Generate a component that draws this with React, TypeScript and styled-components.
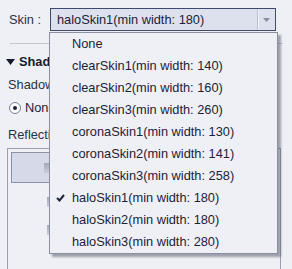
import React from 'react';
import styled, { createGlobalStyle } from 'styled-components';

const GlobalStyle = createGlobalStyle`
  html, body {
    margin: 0;
    padding: 0;
    background: #eff0f6;
  }
  body {
    font-family: "Liberation Sans", Arial, sans-serif;
    font-size: 12.8px;
    color: #1c2238;
  }
`;

const skins = [
  'None',
  'clearSkin1(min width: 140)',
  'clearSkin2(min width: 160)',
  'clearSkin3(min width: 260)',
  'coronaSkin1(min width: 130)',
  'coronaSkin2(min width: 141)',
  'coronaSkin3(min width: 258)',
  'haloSkin1(min width: 180)',
  'haloSkin2(min width: 180)',
  'haloSkin3(min width: 280)',
];

const Page = styled.div`
  position: relative;
  width: 292px;
  height: 269px;
  overflow: hidden;
  background: #eff0f6;
`;

const SkinRow = styled.div`
  display: flex;
  align-items: center;
  padding: 8px 16px 0 9px;
  height: 23px;
`;

const Label = styled.span`
  width: 41px;
  color: #2d3142;
`;

const SelectBox = styled.div`
  flex: 1;
  display: flex;
  align-items: center;
  height: 21px;
  background: #dde1ee;
  border: 1px solid #3f4a6e;
  padding-left: 6px;
`;

const SelectValue = styled.span`
  flex: 1;
  color: #1c2238;
`;

const ArrowCell = styled.div`
  width: 17px;
  height: 100%;
  display: flex;
  align-items: center;
  justify-content: center;
  border-left: 1px solid #b8bdd0;
  box-shadow: inset 1px 0 0 #f4f5fa;
`;

const Divider = styled.div`
  margin: 12px 9px 0 10px;
  height: 1px;
  background: #c3c7d4;
`;

const SectionHeader = styled.div`
  display: flex;
  align-items: center;
  gap: 4px;
  margin: 10px 0 0 6px;
  font-weight: bold;
  color: #151a2e;
`;

const FieldLabel = styled.div<{ $top: number }>`
  margin: ${p => p.$top}px 0 0 8px;
  color: #2a3046;
`;

const RadioRow = styled.div`
  display: flex;
  align-items: center;
  gap: 4px;
  margin: 8px 0 0 9px;
`;

const Radio = styled.span`
  flex: none;
  width: 10px;
  height: 10px;
  border-radius: 50%;
  border: 1px solid #7a8096;
  background: #fbfbfd;
  display: flex;
  align-items: center;
  justify-content: center;
  &::after {
    content: '';
    width: 4px;
    height: 4px;
    border-radius: 50%;
    background: #1c2238;
  }
`;

const PreviewBox = styled.div`
  margin: 6px 11px 0 7px;
  height: 114px;
  border: 1px solid #9ba0b2;
  padding: 3px;
  display: flex;
  flex-direction: column;
  gap: 10px;
`;

const PreviewTile = styled.div`
  width: 220px;
  height: 29px;
  background: #d5d9e8;
  border: 1px solid #8c91a6;
  display: flex;
  align-items: center;
  padding-left: 32px;
`;

const PreviewRow = styled.div`
  height: 18px;
  display: flex;
  align-items: center;
  padding-left: 36px;
`;

const Knob = styled.div`
  width: 6px;
  height: 10px;
  background: linear-gradient(#a3a9be, #c9cddb);
`;

const Menu = styled.div`
  position: absolute;
  left: 49px;
  top: 32px;
  width: 227px;
  background: #eff0f6;
  border: 1px solid #8a8fa2;
  box-shadow: 3px 3px 2px rgba(60, 64, 80, 0.45);
`;

const MenuItem = styled.div`
  position: relative;
  height: 22px;
  line-height: 21px;
  padding-left: 22px;
  color: #1c2238;
  white-space: nowrap;
`;

const Check = styled.svg`
  position: absolute;
  left: 6px;
  top: 7px;
`;

const App: React.FC = () => {
  const selected = 'haloSkin1(min width: 180)';

  return (
    <Page>
      <GlobalStyle />
      <SkinRow>
        <Label>Skin :</Label>
        <SelectBox>
          <SelectValue>{selected}</SelectValue>
          <ArrowCell>
            <svg width="7" height="4" viewBox="0 0 7 4">
              <path d="M0 0 H7 L3.5 4 Z" fill="#8a8fa0" />
            </svg>
          </ArrowCell>
        </SelectBox>
      </SkinRow>
      <Divider />
      <SectionHeader>
        <svg width="9" height="6" viewBox="0 0 9 6">
          <path d="M0 0 H9 L4.5 6 Z" fill="#151a2e" />
        </svg>
        Shadow Options
      </SectionHeader>
      <FieldLabel $top={8}>Shadow Type</FieldLabel>
      <RadioRow>
        <Radio />
        None
      </RadioRow>
      <FieldLabel $top={12}>Reflection</FieldLabel>
      <PreviewBox>
        <PreviewTile>
          <Knob />
        </PreviewTile>
        <PreviewRow>
          <Knob />
        </PreviewRow>
        <PreviewRow>
          <Knob />
        </PreviewRow>
      </PreviewBox>

      {/* open list of the Skin select, drawn over the panel */}
      <Menu>
        {skins.map(s => (
          <MenuItem key={s}>
            {s === selected && (
              <Check width="9" height="8" viewBox="0 0 9 8">
                <path d="M1 4 L3.5 6.5 L8 1" stroke="#1c2238" strokeWidth="2" fill="none" />
              </Check>
            )}
            {s}
          </MenuItem>
        ))}
      </Menu>
    </Page>
  );
};

export default App;
